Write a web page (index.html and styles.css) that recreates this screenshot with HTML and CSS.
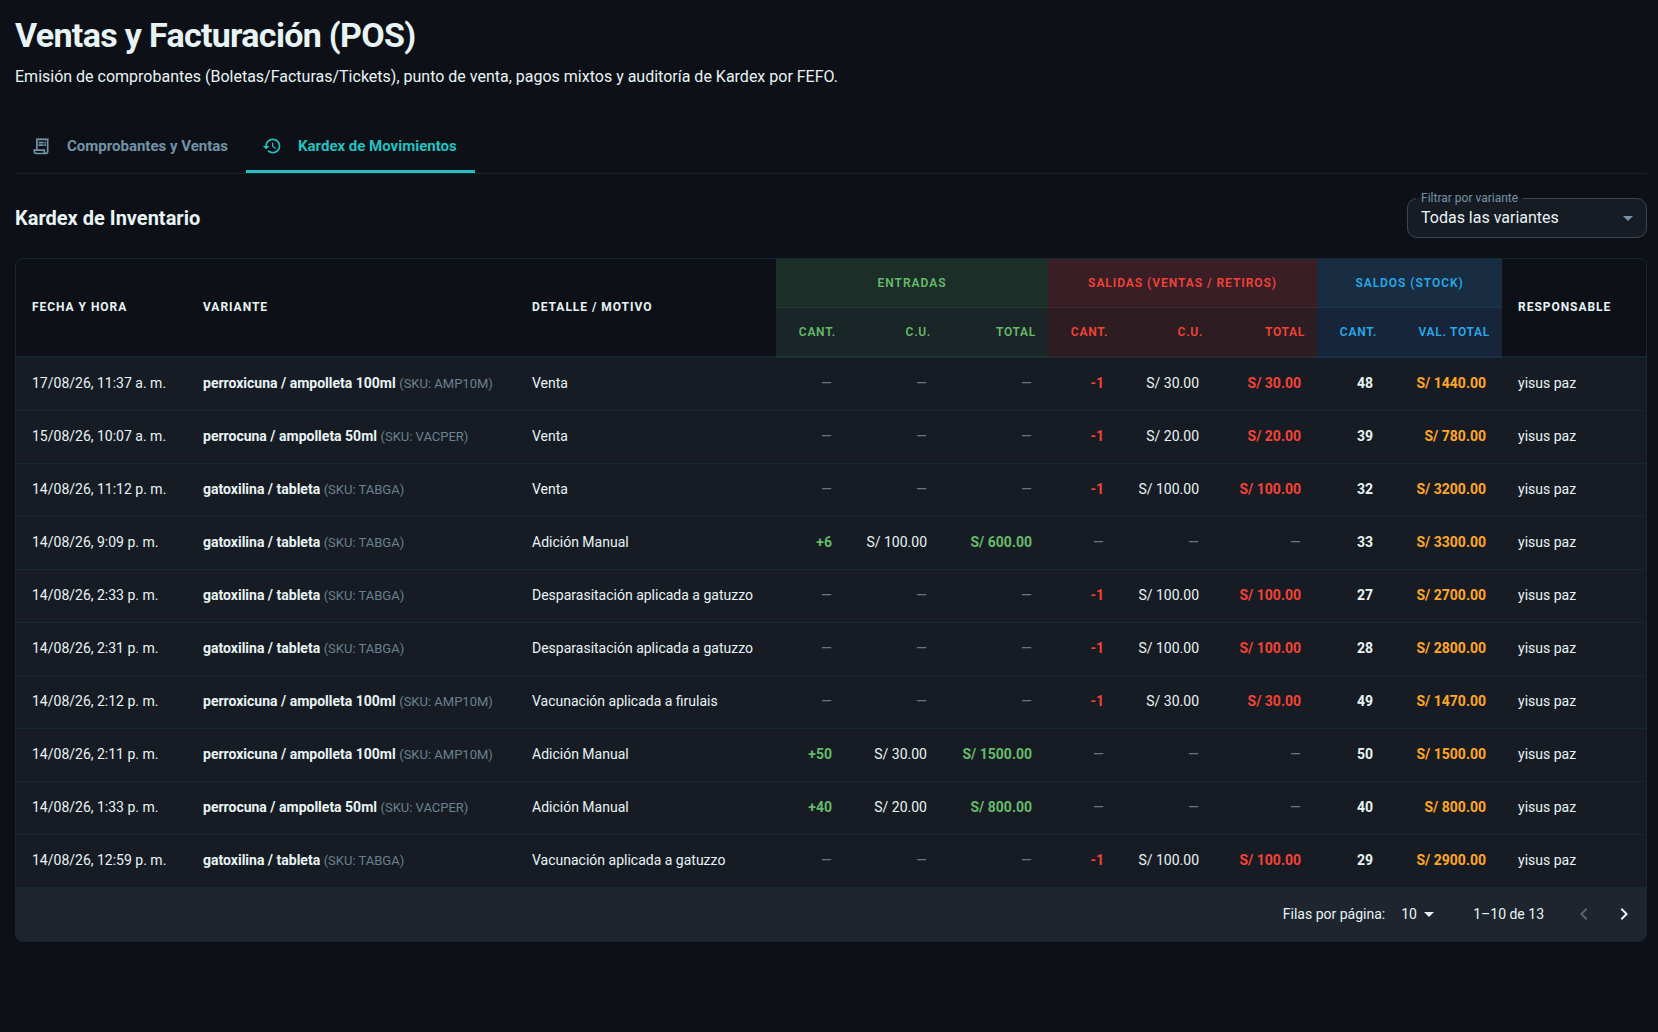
FILE: index.html
```html
<!DOCTYPE html>
<html lang="es">
<head>
<meta charset="utf-8">
<title>Ventas y Facturación (POS)</title>
<link rel="stylesheet" href="styles.css">
</head>
<body>
<main class="page">
  <header class="page-header">
    <h1 class="page-title">Ventas y Facturación (POS)</h1>
    <p class="page-subtitle">Emisión de comprobantes (Boletas/Facturas/Tickets), punto de venta, pagos mixtos y auditoría de Kardex por FEFO.</p>
  </header>

  <div class="tabs" role="tablist">
    <button class="tab" type="button" role="tab" aria-selected="false">
      <svg class="tab-icon" viewBox="0 0 24 24" aria-hidden="true"><path d="M19.5 3.5 18 2l-1.5 1.5L15 2l-1.500 1.500L12 2l-1.500 1.500L9 2 7.500 3.500 6 2v14H3v3c0 1.660 1.340 3 3 3h12c1.660 0 3-1.340 3-3V2zM15 20H6c-.55 0-1-.45-1-1v-1h10zm4-1c0 .55-.45 1-1 1s-1-.45-1-1v-3H8V5h11z"/><path d="M9 7h6v2H9zm7 0h2v2h-2zm-7 3h6v2H9zm7 0h2v2h-2z"/></svg>
      <span>Comprobantes y Ventas</span>
    </button>
    <button class="tab tab-active" type="button" role="tab" aria-selected="true">
      <svg class="tab-icon" viewBox="0 0 24 24" aria-hidden="true"><path d="M13 3c-4.970 0-9 4.030-9 9H1l3.890 3.890.070.140L9 12H6c0-3.870 3.130-7 7-7s7 3.130 7 7-3.130 7-7 7c-1.930 0-3.680-.79-4.940-2.060l-1.420 1.420C8.270 19.990 10.510 21 13 21c4.970 0 9-4.030 9-9s-4.030-9-9-9m-1 5v5l4.280 2.540.72-1.210-3.500-2.080V8z"/></svg>
      <span>Kardex de Movimientos</span>
    </button>
  </div>

  <section class="kardex">
    <div class="section-bar">
      <h2 class="section-title">Kardex de Inventario</h2>
      <fieldset class="filter">
        <legend class="filter-legend"><label for="variant">Filtrar por variante</label></legend>
        <div class="filter-row">
          <select class="filter-select" id="variant"><option>Todas las variantes</option></select>
          <svg class="arrow" viewBox="0 0 24 24" aria-hidden="true"><path d="m7 10 5 5 5-5z"/></svg>
        </div>
      </fieldset>
    </div>

    <div class="card">
      <table class="table">
        <colgroup>
          <col class="w-date"><col class="w-variant"><col class="w-detail">
          <col class="w-qty"><col class="w-unit"><col class="w-total-in">
          <col class="w-qty"><col class="w-unit"><col class="w-total-out">
          <col class="w-qty"><col class="w-value"><col class="w-user">
        </colgroup>
        <thead>
          <tr>
            <th rowspan="2">Fecha y hora</th>
            <th rowspan="2">Variante</th>
            <th rowspan="2">Detalle / Motivo</th>
            <th class="group in" colspan="3">Entradas</th>
            <th class="group out" colspan="3">Salidas (Ventas / Retiros)</th>
            <th class="group stock" colspan="2">Saldos (Stock)</th>
            <th rowspan="2">Responsable</th>
          </tr>
          <tr>
            <th class="sub in">Cant.</th><th class="sub in">C.U.</th><th class="sub in">Total</th>
            <th class="sub out">Cant.</th><th class="sub out">C.U.</th><th class="sub out">Total</th>
            <th class="sub stock">Cant.</th><th class="sub stock">Val. total</th>
          </tr>
        </thead>
        <tbody>
          <tr><td>17/08/26, 11:37 a. m.</td><td><b>perroxicuna / ampolleta 100ml</b> <span class="sku">(SKU: AMP10M)</span></td><td>Venta</td><td class="num none">—</td><td class="num none">—</td><td class="num none">—</td><td class="num minus">-1</td><td class="num">S/ 30.00</td><td class="num minus">S/ 30.00</td><td class="num balance">48</td><td class="num value">S/ 1440.00</td><td>yisus paz</td></tr>
          <tr><td>15/08/26, 10:07 a. m.</td><td><b>perrocuna / ampolleta 50ml</b> <span class="sku">(SKU: VACPER)</span></td><td>Venta</td><td class="num none">—</td><td class="num none">—</td><td class="num none">—</td><td class="num minus">-1</td><td class="num">S/ 20.00</td><td class="num minus">S/ 20.00</td><td class="num balance">39</td><td class="num value">S/ 780.00</td><td>yisus paz</td></tr>
          <tr><td>14/08/26, 11:12 p. m.</td><td><b>gatoxilina / tableta</b> <span class="sku">(SKU: TABGA)</span></td><td>Venta</td><td class="num none">—</td><td class="num none">—</td><td class="num none">—</td><td class="num minus">-1</td><td class="num">S/ 100.00</td><td class="num minus">S/ 100.00</td><td class="num balance">32</td><td class="num value">S/ 3200.00</td><td>yisus paz</td></tr>
          <tr><td>14/08/26, 9:09 p. m.</td><td><b>gatoxilina / tableta</b> <span class="sku">(SKU: TABGA)</span></td><td>Adición Manual</td><td class="num plus">+6</td><td class="num">S/ 100.00</td><td class="num plus">S/ 600.00</td><td class="num none">—</td><td class="num none">—</td><td class="num none">—</td><td class="num balance">33</td><td class="num value">S/ 3300.00</td><td>yisus paz</td></tr>
          <tr><td>14/08/26, 2:33 p. m.</td><td><b>gatoxilina / tableta</b> <span class="sku">(SKU: TABGA)</span></td><td>Desparasitación aplicada a gatuzzo</td><td class="num none">—</td><td class="num none">—</td><td class="num none">—</td><td class="num minus">-1</td><td class="num">S/ 100.00</td><td class="num minus">S/ 100.00</td><td class="num balance">27</td><td class="num value">S/ 2700.00</td><td>yisus paz</td></tr>
          <tr><td>14/08/26, 2:31 p. m.</td><td><b>gatoxilina / tableta</b> <span class="sku">(SKU: TABGA)</span></td><td>Desparasitación aplicada a gatuzzo</td><td class="num none">—</td><td class="num none">—</td><td class="num none">—</td><td class="num minus">-1</td><td class="num">S/ 100.00</td><td class="num minus">S/ 100.00</td><td class="num balance">28</td><td class="num value">S/ 2800.00</td><td>yisus paz</td></tr>
          <tr><td>14/08/26, 2:12 p. m.</td><td><b>perroxicuna / ampolleta 100ml</b> <span class="sku">(SKU: AMP10M)</span></td><td>Vacunación aplicada a firulais</td><td class="num none">—</td><td class="num none">—</td><td class="num none">—</td><td class="num minus">-1</td><td class="num">S/ 30.00</td><td class="num minus">S/ 30.00</td><td class="num balance">49</td><td class="num value">S/ 1470.00</td><td>yisus paz</td></tr>
          <tr><td>14/08/26, 2:11 p. m.</td><td><b>perroxicuna / ampolleta 100ml</b> <span class="sku">(SKU: AMP10M)</span></td><td>Adición Manual</td><td class="num plus">+50</td><td class="num">S/ 30.00</td><td class="num plus">S/ 1500.00</td><td class="num none">—</td><td class="num none">—</td><td class="num none">—</td><td class="num balance">50</td><td class="num value">S/ 1500.00</td><td>yisus paz</td></tr>
          <tr><td>14/08/26, 1:33 p. m.</td><td><b>perrocuna / ampolleta 50ml</b> <span class="sku">(SKU: VACPER)</span></td><td>Adición Manual</td><td class="num plus">+40</td><td class="num">S/ 20.00</td><td class="num plus">S/ 800.00</td><td class="num none">—</td><td class="num none">—</td><td class="num none">—</td><td class="num balance">40</td><td class="num value">S/ 800.00</td><td>yisus paz</td></tr>
          <tr><td>14/08/26, 12:59 p. m.</td><td><b>gatoxilina / tableta</b> <span class="sku">(SKU: TABGA)</span></td><td>Vacunación aplicada a gatuzzo</td><td class="num none">—</td><td class="num none">—</td><td class="num none">—</td><td class="num minus">-1</td><td class="num">S/ 100.00</td><td class="num minus">S/ 100.00</td><td class="num balance">29</td><td class="num value">S/ 2900.00</td><td>yisus paz</td></tr>
        </tbody>
      </table>
      <footer class="pagination">
        <label for="rows">Filas por página:</label>
        <div class="rows-field">
          <select class="rows-select" id="rows"><option>10</option></select>
          <svg class="arrow arrow-light" viewBox="0 0 24 24" aria-hidden="true"><path d="m7 10 5 5 5-5z"/></svg>
        </div>
        <span class="range">1–10 de 13</span>
        <div class="pager">
          <button class="pager-button" type="button" disabled aria-label="Página anterior"><svg viewBox="0 0 24 24" aria-hidden="true"><path d="M15.410 16.590 10.830 12l4.580-4.590L14 6l-6 6 6 6z"/></svg></button>
          <button class="pager-button" type="button" aria-label="Página siguiente"><svg viewBox="0 0 24 24" aria-hidden="true"><path d="M8.590 16.590 13.170 12 8.590 7.410 10 6l6 6-6 6z"/></svg></button>
        </div>
      </footer>
    </div>
  </section>
</main>
</body>
</html>
```
FILE: styles.css
```css
* { box-sizing: border-box; }

body {
  margin: 0;
  min-height: 100vh;
  background: #0d1117;
  color: #e8f4f4;
  font-family: Roboto, "Liberation Sans", sans-serif;
  font-size: 14px;
}

button, select { font: inherit; color: inherit; }

.page { padding: 14px 11px 15px 15px; }

.page-title {
  margin: 0;
  font-size: 34px;
  line-height: 42px;
  font-weight: 700;
  letter-spacing: -0.02em;
}

.page-subtitle { margin: 9px 0 0; font-size: 16px; line-height: 24px; }

.tabs {
  display: flex;
  margin-top: 32px;
  border-bottom: 1px solid #15232a;
}

.tab {
  display: flex;
  align-items: center;
  gap: 16px;
  height: 52px;
  padding: 0 18px 0 16px;
  border: 0;
  border-bottom: 3px solid transparent;
  background: none;
  color: #7393a7;
  font-size: 15px;
  font-weight: 700;
}

.tab-active { border-bottom-color: #26c0c0; color: #26c0c0; }
.tab-icon { width: 20px; height: 20px; fill: currentColor; }

.section-bar {
  display: flex;
  align-items: flex-end;
  justify-content: space-between;
  margin: 17px 0 20px;
}

.section-title { margin: 0; font-size: 20px; line-height: 40px; font-weight: 700; }

.filter {
  width: 240px;
  margin: 0;
  padding: 0 6px 0 4px;
  border: 1px solid #3f4650;
  border-radius: 10px;
  background: #171c24;
}

.filter-legend {
  margin-left: 4px;
  padding: 0 5px;
  color: #7393a7;
  font-size: 12px;
  line-height: 15px;
}

.filter-row { display: flex; align-items: center; height: 31px; padding-bottom: 7px; }
.filter-select, .rows-select {
  appearance: none;
  border: 0;
  background: transparent;
}
.filter-select { flex: 1; padding: 0 9px 2px; font-size: 16px; }

.arrow { width: 24px; height: 24px; fill: #7393a7; }
.arrow-light { fill: currentColor; }

.card {
  overflow: hidden;
  border: 1px solid #152a2f;
  border-radius: 8px;
  background: #171c24;
}

.table {
  width: 100%;
  table-layout: fixed;
  border-collapse: separate;
  border-spacing: 0;
}

.w-date { width: 171px; }
.w-variant { width: 329px; }
.w-detail { width: 260px; }
.w-qty { width: 72px; }
.w-unit { width: 95px; }
.w-total-in { width: 105px; }
.w-total-out { width: 102px; }
.w-value { width: 113px; }
.w-user { width: 144px; }

th {
  height: 50px;
  padding: 0 16px 2px;
  border-bottom: 2px solid #12262b;
  background: #0d1117;
  font-size: 12px;
  font-weight: 700;
  letter-spacing: 0.08em;
  text-align: left;
  text-transform: uppercase;
}

.group {
  height: 49px;
  padding-bottom: 0;
  border-bottom-width: 1px;
  font-weight: 600;
  text-align: center;
}
.sub { padding: 0 12px; font-weight: 600; letter-spacing: 0.06em; text-align: right; }
.group.in { background: #1c2e28; color: #66bb6a; border-color: #213a30; }
.group.out { background: #391e26; color: #f44336; border-color: #3a2a34; }
.group.stock { background: #182c42; color: #29a9e8; border-color: #1c344c; }
.sub.in { background: #1a2527; color: #66bb6a; border-color: #1b3531; }
.sub.out { background: #2d1d23; color: #f44336; border-color: #2d2931; }
.sub.stock { background: #162539; color: #29a9e8; border-color: #173248; }

td {
  height: 53px;
  padding: 0 16px 2px;
  border-bottom: 1px solid #15282f;
  font-size: 14px;
  white-space: nowrap;
}

.sku { color: #69818f; font-size: 13px; }
.num { text-align: right; }
.none { color: #69757f; }
.plus, .minus, .balance, .value { font-weight: 700; }
.plus { color: #66bb6a; }
.minus { color: #f44336; }
.value { color: #ffa726; }

.pagination {
  display: flex;
  align-items: center;
  justify-content: flex-end;
  height: 53px;
  padding: 0 2px 1px 0;
  background: #1e252f;
}

.rows-field { display: flex; align-items: center; margin: 0 32px 0 16px; }
.rows-select { padding: 0; }
.pager { display: flex; margin-left: 20px; }
.pager-button {
  display: flex;
  padding: 8px;
  border: 0;
  background: none;
}
.pager-button svg { width: 24px; height: 24px; fill: currentColor; }
.pager-button:disabled { opacity: 0.3; }
```
